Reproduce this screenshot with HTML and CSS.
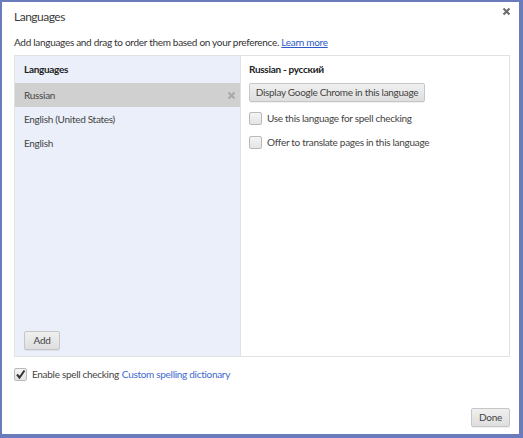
FILE: index.html
```html
<!DOCTYPE html>
<html>
<head>
<meta charset="utf-8">
<link rel="stylesheet" href="styles.css">
</head>
<body>
<div class="window">
  <div class="close" aria-label="Close">
    <svg width="9" height="9" viewBox="0 0 9 9"><path d="M1.5 1.5L7.5 7.5M7.5 1.5L1.5 7.5" stroke="#6a6a6a" stroke-width="2"/></svg>
  </div>
  <div class="title">Languages</div>
  <div class="desc">Add languages and drag to order them based on your preference. <a class="learn" href="#">Learn more</a></div>
  <div class="panel">
    <div class="list">
      <div class="list-head">Languages</div>
      <div class="row selected">Russian
        <span class="row-x"><svg width="9" height="9" viewBox="0 0 9 9"><path d="M1.5 1.5L7.5 7.5M7.5 1.5L1.5 7.5" stroke="#a8a8a8" stroke-width="2"/></svg></span>
      </div>
      <div class="row">English (United States)</div>
      <div class="row">English</div>
      <div class="list-foot"><button class="btn add">Add</button></div>
    </div>
    <div class="detail">
      <div class="detail-head">Russian - русский</div>
      <button class="btn display">Display Google Chrome in this language</button>
      <label class="check-row first"><span class="cb"></span>Use this language for spell checking</label>
      <label class="check-row"><span class="cb"></span>Offer to translate pages in this language</label>
    </div>
  </div>
  <label class="spell"><span class="cb checked"><svg width="11" height="11" viewBox="0 0 11 11"><path d="M2 5.5L4.5 8.5L9.5 1.5" fill="none" stroke="#333" stroke-width="2"/></svg></span>Enable spell checking <a class="dict" href="#">Custom spelling dictionary</a></label>
  <div class="footer"><button class="btn done">Done</button></div>
</div>
</body>
</html>
```
FILE: styles.css
```css
html, body {
  margin: 0;
  padding: 0;
  background: #fff;
}
.window {
  position: relative;
  width: 523px;
  height: 438px;
  box-sizing: border-box;
  border-style: solid;
  border-color: #6b7cbc;
  border-width: 2px 4px 4px 2px;
  background: #fff;
  padding: 0 9px 7px 12px;
  display: flex;
  flex-direction: column;
  font-family: "Lato", "Noto Sans", sans-serif;
  font-size: 10px;
  letter-spacing: -0.3px;
  color: #333;
}
.close {
  position: absolute;
  right: 8px;
  top: 5px;
  width: 9px;
  height: 9px;
}
.close svg { display: block; }
.title {
  padding-top: 6px;
  line-height: 18px;
  font-size: 12px;
  letter-spacing: -0.5px;
  color: #3c3c3c;
}
.desc {
  margin-top: 8px;
  line-height: 16px;
  margin-bottom: 5px;
}
.learn {
  color: #2a5bc9;
  text-decoration: underline;
}
.panel {
  display: flex;
  height: 302px;
  box-sizing: border-box;
  border: 1px solid #e2e2e2;
}
.list {
  width: 225px;
  background: #eaeff9;
  border-right: 1px solid #e2e2e2;
  display: flex;
  flex-direction: column;
}
.list-head {
  height: 27px;
  line-height: 27px;
  padding-left: 9px;
  font-weight: bold;
  color: #222;
}
.row {
  position: relative;
  height: 24px;
  line-height: 24px;
  padding-left: 9px;
  color: #444;
}
.row.selected {
  background: #d0d0d0;
}
.row-x {
  position: absolute;
  right: 4px;
  top: 8px;
  width: 9px;
  height: 9px;
}
.row-x svg { display: block; }
.list-foot {
  margin-top: auto;
  padding: 0 0 6px 9px;
}
.btn {
  font-family: inherit;
  font-size: 10px;
  letter-spacing: inherit;
  color: #444;
  height: 19px;
  line-height: 15px;
  padding: 0 7px;
  border: 1px solid #c6c6c6;
  border-radius: 2px;
  background: linear-gradient(#f0f0f0, #dedede);
  box-shadow: 0 1px 0 rgba(0,0,0,0.06);
  display: block;
}
.add { width: 36px; padding: 0; }
.detail {
  flex: 1;
  padding-left: 8px;
  display: flex;
  flex-direction: column;
  align-items: flex-start;
}
.detail-head {
  height: 27px;
  line-height: 27px;
  font-weight: bold;
  color: #222;
}
.display { width: 176px; padding: 0; white-space: nowrap; }
.check-row {
  display: flex;
  align-items: center;
  height: 24px;
  color: #444;
}
.check-row.first { margin-top: 4px; }
.cb {
  width: 11px;
  height: 11px;
  border: 1px solid #b9b9b9;
  border-radius: 2px;
  background: linear-gradient(#f5f5f5, #e4e4e4);
  margin-right: 5px;
  flex: none;
  position: relative;
}
.cb svg {
  position: absolute;
  left: 0;
  top: 0;
}
.spell {
  display: flex;
  align-items: center;
  height: 18px;
  margin-top: 8px;
  color: #444;
}
.dict {
  color: #3d6bd0;
  text-decoration: none;
  margin-left: 3px;
}
.footer {
  margin-top: auto;
  display: flex;
  justify-content: flex-end;
}
.done { width: 39px; padding: 0; }
```
